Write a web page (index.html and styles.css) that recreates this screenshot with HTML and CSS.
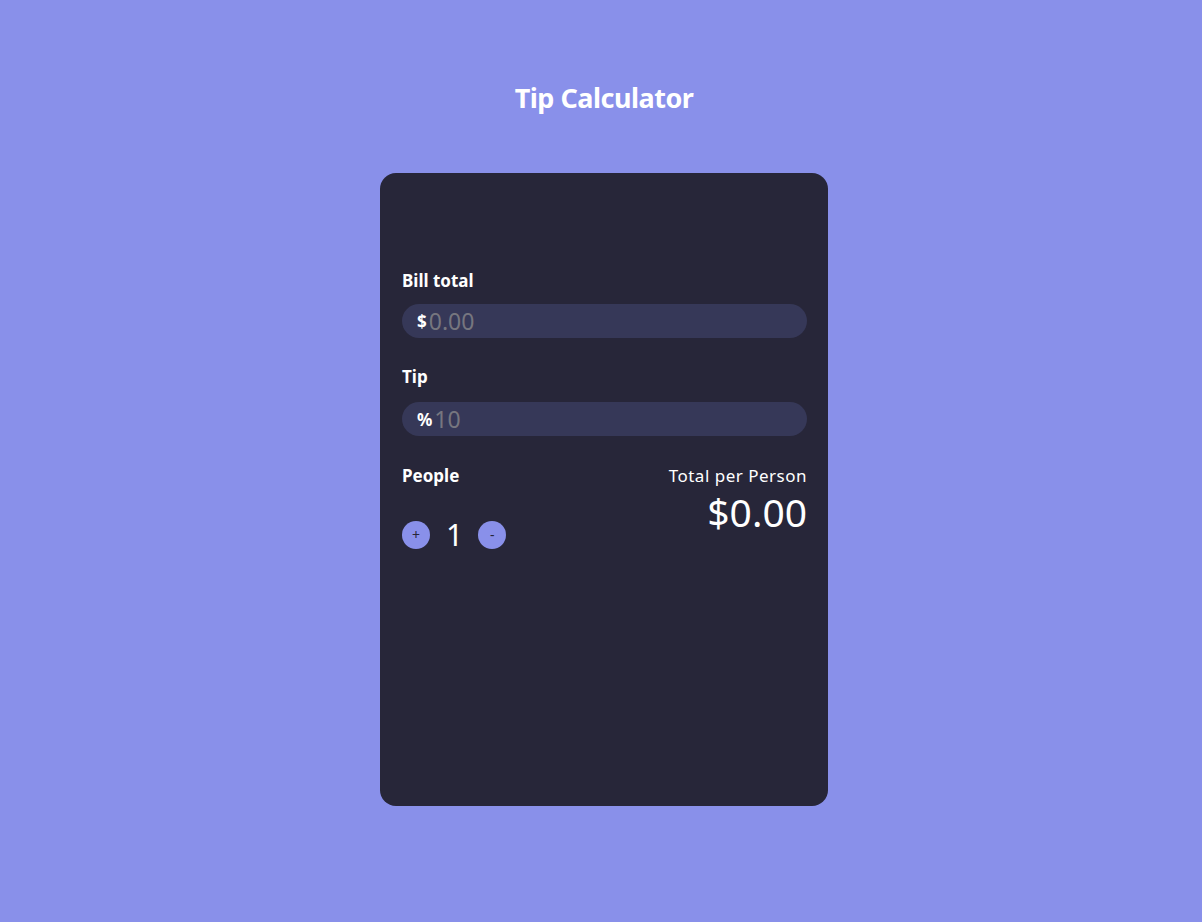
FILE: index.html
```html
<!DOCTYPE html>
<html>
<head>
<meta charset="utf-8">
<link rel="stylesheet" href="styles.css">
</head>
<body>
<h1 class="title">Tip Calculator</h1>
<div class="card">
  <div class="field">
    <label class="label">Bill total</label>
    <div class="input-wrap"><span class="prefix">$</span><input class="input" placeholder="0.00"></div>
  </div>
  <div class="field">
    <label class="label">Tip</label>
    <div class="input-wrap"><span class="prefix">%</span><input class="input" placeholder="10"></div>
  </div>
  <div class="bottom">
    <div class="people">
      <div class="label">People</div>
      <div class="counter">
        <button class="btn">+</button>
        <span class="count">1</span>
        <button class="btn">-</button>
      </div>
    </div>
    <div class="total">
      <div class="total-label">Total per Person</div>
      <div class="total-value">$0.00</div>
    </div>
  </div>
</div>
</body>
</html>
```
FILE: styles.css
```css
html, body {
  margin: 0;
  padding: 0;
}
body {
  background: #8990ea;
  font-family: "Noto Sans", "Open Sans", sans-serif;
  color: #fff;
  display: flex;
  flex-direction: column;
  align-items: center;
  min-height: 922px;
  padding-left: 6px;
  box-sizing: border-box;
}
.title {
  margin: 76px 0 0;
  font-size: 27px;
  font-weight: 700;
  line-height: 44px;
  letter-spacing: -0.5px;
}
.card {
  margin-top: 53px;
  width: 448px;
  height: 633px;
  box-sizing: border-box;
  background: #272639;
  border-radius: 16px;
  padding: 94px 21px 0 22px;
}
.field {
  margin-bottom: 27px;
}
.label {
  display: block;
  font-size: 17px;
  font-weight: 700;
  line-height: 28px;
  letter-spacing: 0;
  margin-bottom: 9px;
}
.field + .field .label {
  margin-top: -2px;
  margin-bottom: 11px;
}
.input-wrap {
  display: flex;
  align-items: center;
  height: 34px;
  background: #363858;
  border-radius: 17px;
  padding-left: 15px;
}
.prefix {
  font-size: 17px;
  font-weight: 700;
  color: #fff;
}
.input {
  flex: 1;
  background: transparent;
  border: none;
  outline: none;
  font-family: inherit;
  font-size: 23px;
  color: #fff;
  padding: 0 0 0 2px;
  height: 34px;
}
.input::placeholder {
  color: #76767f;
}
.bottom {
  display: flex;
  justify-content: space-between;
  align-items: flex-start;
  margin-top: -1px;
}
.people .label {
  margin-bottom: 0;
}
.counter {
  display: flex;
  align-items: center;
  margin-top: 31px;
}
.btn {
  width: 28px;
  height: 28px;
  border-radius: 50%;
  border: none;
  background: #8990ea;
  color: #272639;
  font-family: inherit;
  font-size: 14px;
  padding: 0;
  line-height: 28px;
}
.count {
  font-size: 30px;
  line-height: 28px;
  margin: 0 15px 0 16px;
}
.total {
  text-align: right;
}
.total-label {
  font-size: 17px;
  line-height: 28px;
  letter-spacing: 0.5px;
}
.total-value {
  font-size: 39px;
  line-height: 44px;
}
```
